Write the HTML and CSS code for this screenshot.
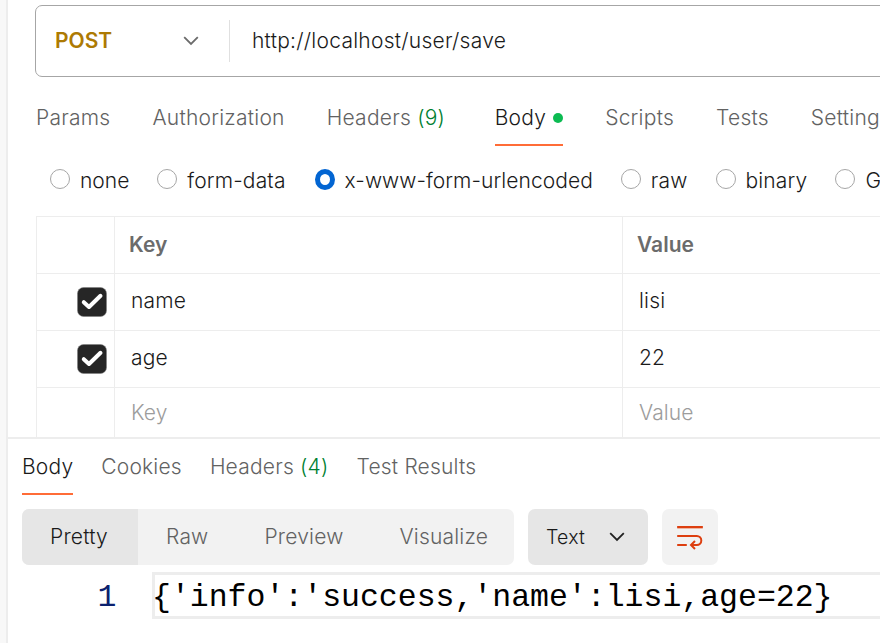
FILE: index.html
```html
<!DOCTYPE html>
<html lang="en">
<head>
<meta charset="utf-8">
<title>Request</title>
<link rel="stylesheet" href="styles.css">
</head>
<body>
<main class="workspace">
  <section class="request">
    <div class="url-bar">
      <div class="method"><span>POST</span>
        <svg class="chevron" width="16" height="10" viewBox="0 0 16 10"><path d="M1.2 1.2 8 8l6.8-6.8"/></svg>
      </div>
      <div class="url">http://localhost/user/save</div>
    </div>
    <nav class="tabs request-tabs">
      <span class="tab">Params</span>
      <span class="tab">Authorization</span>
      <span class="tab headers">Headers <b class="count">(9)</b></span>
      <span class="tab active">Body<i class="dot"></i></span>
      <span class="tab">Scripts</span>
      <span class="tab">Tests</span>
      <span class="tab">Settings</span>
    </nav>
    <div class="modes">
      <span class="mode"><i class="radio"></i>none</span>
      <span class="mode"><i class="radio"></i>form-data</span>
      <span class="mode long"><i class="radio checked"></i>x-www-form-urlencoded</span>
      <span class="mode"><i class="radio"></i>raw</span>
      <span class="mode"><i class="radio"></i>binary</span>
      <span class="mode"><i class="radio"></i>GraphQL</span>
    </div>
    <div class="params">
      <div class="row head"><div class="cell"></div><div class="cell">Key</div><div class="cell">Value</div></div>
      <div class="row">
        <div class="cell pick"><svg class="check" width="30" height="30" viewBox="0 0 30 30"><rect x=".5" y=".5" width="29" height="29" rx="6"/><path d="M6.8 15.2 12 20 23.5 8.8"/></svg></div>
        <div class="cell">name</div><div class="cell">lisi</div>
      </div>
      <div class="row">
        <div class="cell pick"><svg class="check" width="30" height="30" viewBox="0 0 30 30"><rect x=".5" y=".5" width="29" height="29" rx="6"/><path d="M6.8 15.2 12 20 23.5 8.8"/></svg></div>
        <div class="cell">age</div><div class="cell">22</div>
      </div>
      <div class="row blank"><div class="cell"></div><div class="cell">Key</div><div class="cell">Value</div></div>
    </div>
  </section>
  <section class="response">
    <nav class="tabs response-tabs">
      <span class="tab active">Body</span>
      <span class="tab">Cookies</span>
      <span class="tab">Headers <b class="count">(4)</b></span>
      <span class="tab">Test Results</span>
    </nav>
    <div class="toolbar">
      <div class="views">
        <span class="view selected">Pretty</span>
        <span class="view">Raw</span>
        <span class="view">Preview</span>
        <span class="view">Visualize</span>
      </div>
      <div class="format"><span>Text</span>
        <svg class="chevron" width="16" height="10" viewBox="0 0 16 10"><path d="M1.2 1.2 8 8l6.8-6.8"/></svg>
      </div>
      <div class="wrap">
        <svg width="28" height="26" viewBox="0 0 28 26"><path class="faded" d="M1.2 3.5h25.6"/><path d="M1.2 3h25.6M1.2 12h19.6a4.5 4.5 0 0 1 0 9H15M1.2 21h9.6M19 17l-4 4 4 4"/></svg>
      </div>
    </div>
    <div class="code">
      <span class="line-number">1</span>
      <span class="line">{'info':'success,'name':lisi,age=22}</span>
    </div>
  </section>
</main>
</body>
</html>
```
FILE: styles.css
```css
* { box-sizing: border-box; }
body {
  margin: 0;
  width: 880px;
  height: 643px;
  overflow: hidden;
  background: #f8f8f8;
  color: #1a1a1a;
  font: 300 21px/28px Inter, sans-serif;
  letter-spacing: .2px;
  white-space: nowrap;
}
.workspace {
  height: 643px;
  margin-left: 6px;
  border-left: 2px solid #ededed;
  background: #fff;
  overflow: hidden;
}
.request {
  height: 439px;
  padding: 5px 0 0 28px;
  border-bottom: 2px solid #ededed;
  overflow: hidden;
}
.url-bar {
  display: flex;
  align-items: center;
  width: 900px;
  height: 72px;
  margin-left: -1px;
  border: 1px solid #a6a6a6;
  border-radius: 7px;
}
.method {
  display: flex;
  align-items: center;
  justify-content: space-between;
  width: 194px;
  height: 42px;
  padding: 0 30px 0 19px;
  border-right: 1px solid #e0e0e0;
  color: #ad7a03;
  font-weight: 600;
  letter-spacing: 0;
}
.url { padding-left: 22px; letter-spacing: .25px; }
.chevron path { fill: none; stroke: #6b6b6b; stroke-width: 1.8; }
.tabs { display: flex; color: #626262; }
.tab { flex: none; border-bottom: 2px solid transparent; }
.tab.active { color: #1a1a1a; border-color: #ff6c37; }
.count { color: #007f31; font-weight: 300; }
.request-tabs { gap: 42px; height: 69px; padding-top: 27px; letter-spacing: .24px; }
.request-tabs .tab { height: 42px; }
.request-tabs .headers { margin-right: 7.5px; }
.request-tabs .active { display: flex; }
.dot {
  width: 10px;
  height: 10px;
  margin: 9px 0 0 7px;
  border-radius: 50%;
  background: #0cbb52;
}
.modes { display: flex; gap: 28px; padding: 21px 0 0 14px; height: 70px; letter-spacing: .15px; }
.mode { display: flex; flex: none; gap: 10px; }
.mode:first-child { letter-spacing: 0; }
.mode.long { margin-left: 1px; letter-spacing: .06px; }
.radio {
  width: 20px;
  height: 20px;
  margin-top: 2px;
  border: 1px solid #a6a6a6;
  border-radius: 50%;
}
.radio.checked { border: 5px solid #0265d2; height: 21px; }
.params { width: 900px; border: 1px solid #ededed; }
.row { display: grid; grid-template-columns: 77px 508px 1fr; height: 57px; border-bottom: 1px solid #ededed; }
.cell { padding: 13px 0 0 16px; border-left: 1px solid #ededed; }
.cell:first-child { border-left: 0; }
.head { color: #6b6b6b; font-weight: 600; letter-spacing: 0; }
.head .cell { padding: 14px 0 0 14px; }
.cell.pick { padding: 13px 0 0 40px; }
.check { display: block; }
.check rect { fill: #262626; stroke: #808080; stroke-width: .6; }
.check path { fill: none; stroke: #fff; stroke-width: 4; stroke-linecap: round; stroke-linejoin: round; }
.blank { color: #9c9c9c; letter-spacing: .1px; }
.blank .cell { padding-top: 11px; }
.response { padding-left: 14px; }
.response-tabs { gap: 28px; height: 56px; padding-top: 14px; }
.toolbar { display: flex; gap: 14px; height: 56px; margin-top: 14px; }
.views { display: flex; width: 492px; border-radius: 7px; background: #f2f2f2; color: #626262; overflow: hidden; }
.view { flex: none; padding: 14px 28px; }
.view.selected { width: 116px; background: #e6e6e6; color: #1a1a1a; }
.format {
  display: flex;
  align-items: center;
  justify-content: space-between;
  width: 120px;
  padding: 0 23px 0 18px;
  border-radius: 7px;
  background: #e6e6e6;
  font-size: 19.5px;
}
.format .chevron path { stroke: #212121; }
.wrap { display: grid; place-items: center; width: 56px; border-radius: 7px; background: #f2f2f2; }
.wrap path { fill: none; stroke: #dd3f10; stroke-width: 2; }
.wrap .faded { stroke: #efb5a2; stroke-width: 3; }
.code { display: flex; margin-top: 7px; font: 31.5px/40px "Liberation Mono", monospace; letter-spacing: 0; }
.line-number { width: 130px; padding: 6px 0 0 75.5px; color: #0b216f; }
.line { flex: 1; height: 47px; padding-top: 3px; border: 3px solid #ededed; border-right: 0; color: #000; text-indent: -3px; }
```
